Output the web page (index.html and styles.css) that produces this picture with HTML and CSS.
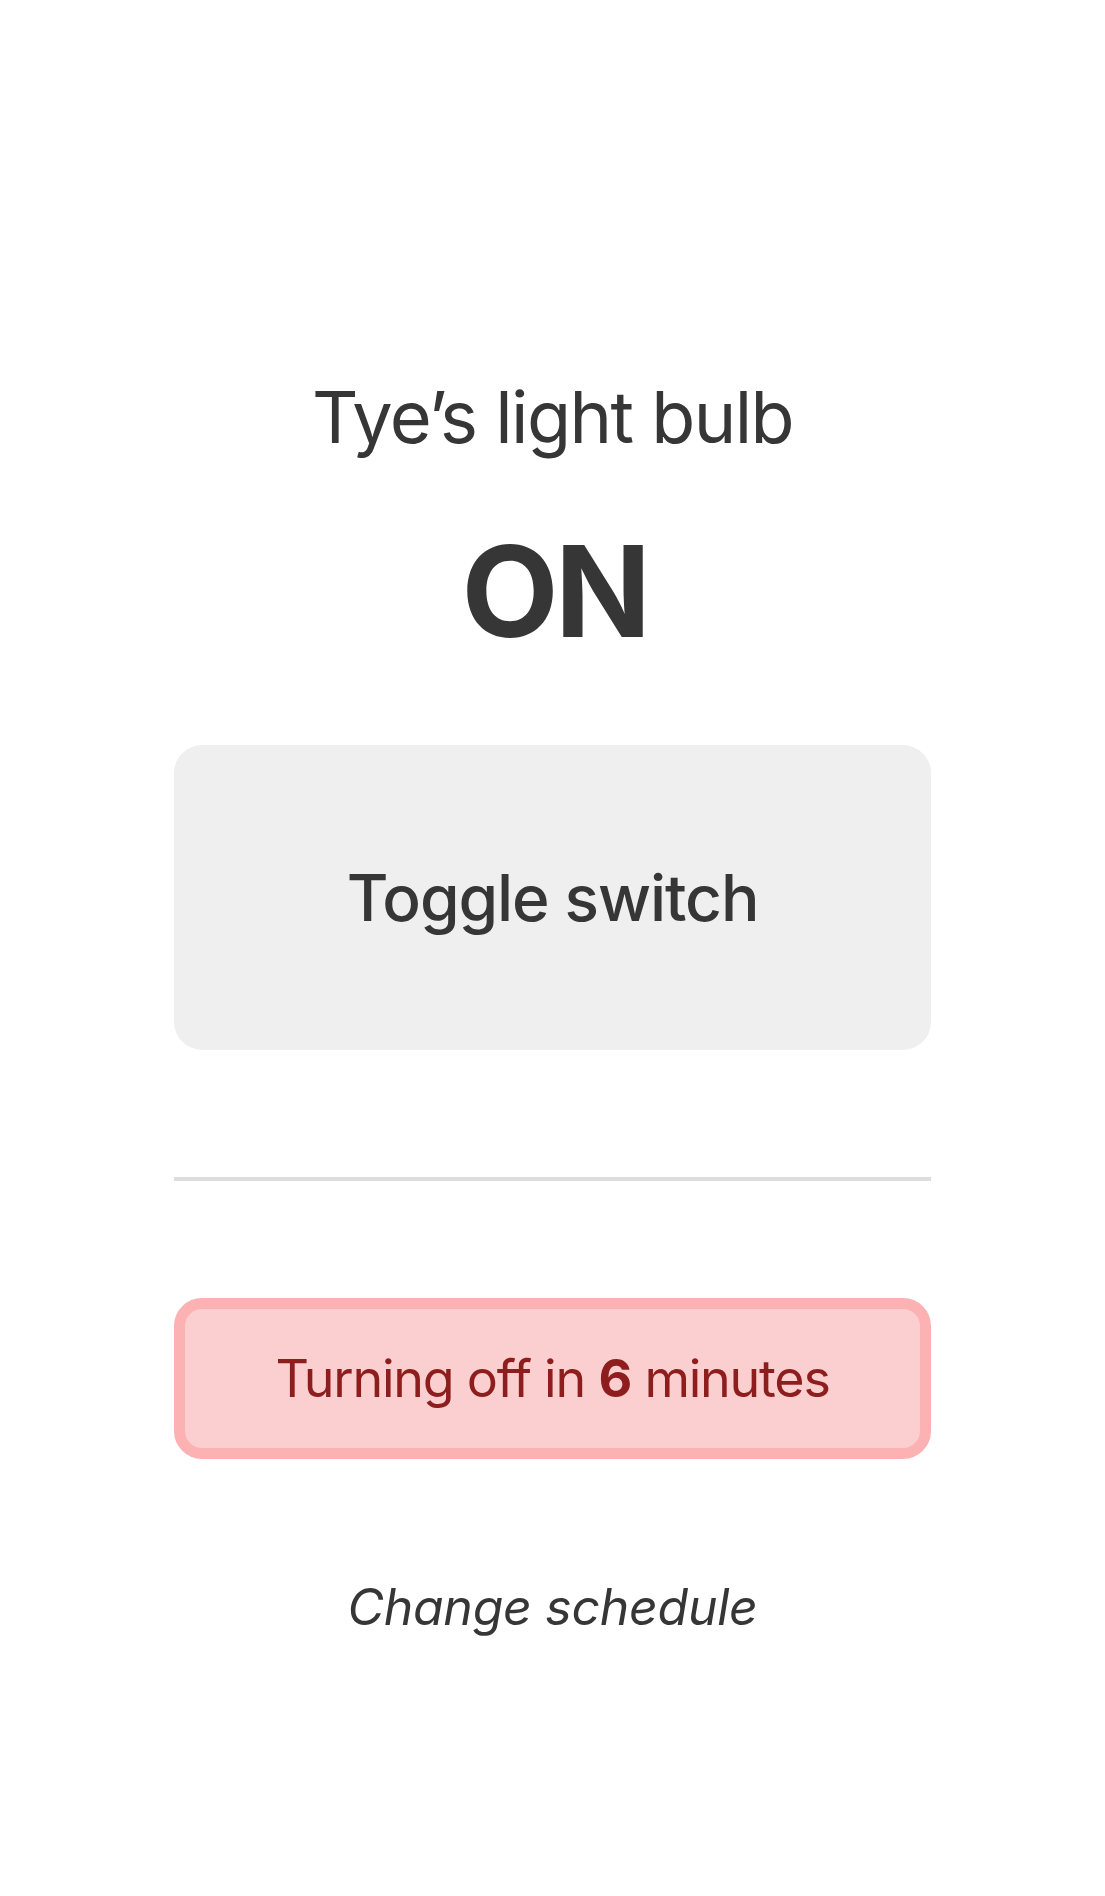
FILE: index.html
```html
<!DOCTYPE html>
<html>
<head>
<meta charset="utf-8">
<link rel="stylesheet" href="styles.css">
</head>
<body>
<main class="page">
  <h1 class="title">Tye’s light bulb</h1>
  <div class="state">ON</div>
  <button class="toggle">Toggle switch</button>
  <hr class="divider">
  <div class="timer">Turning off in <strong>6</strong> minutes</div>
  <a class="schedule">Change schedule</a>
</main>
</body>
</html>
```
FILE: styles.css
```css
html, body {
  margin: 0;
  padding: 0;
  background: #ffffff;
}
body {
  font-family: Inter, "Noto Sans", sans-serif;
  color: #363636;
  letter-spacing: -0.017em;
}
.page {
  width: 757px;
  margin: 0 auto;
  padding-top: 381px;
  display: flex;
  flex-direction: column;
  align-items: stretch;
  text-align: center;
}
.title {
  margin: 0;
  font-size: 72px;
  line-height: 72px;
  font-weight: 400;
  letter-spacing: -1.57px;
}
.state {
  margin-top: 75px;
  font-size: 126px;
  line-height: 126px;
  font-weight: 700;
  letter-spacing: -3.6px;
  padding-left: 4px;
}
.toggle {
  margin-top: 91px;
  height: 305px;
  border: none;
  border-radius: 28px;
  background: #efefef;
  font-family: inherit;
  letter-spacing: -0.017em;
  color: #363636;
  font-size: 64px;
  line-height: 64px;
  font-weight: 500;
  padding: 0;
}
.divider {
  margin: 127px 0 0;
  border: none;
  height: 4px;
  background: #dddddd;
}
.timer {
  margin-top: 117px;
  height: 139px;
  border: 11px solid #fcb2b2;
  border-radius: 28px;
  background: #fbcfcf;
  color: #8e1d1d;
  font-size: 52px;
  line-height: 52px;
  letter-spacing: -1.25px;
  display: flex;
  align-items: center;
  justify-content: center;
  gap: 0.26em;
}
.timer strong {
  font-weight: 700;
}
.schedule {
  margin-top: 116px;
  font-size: 50px;
  line-height: 64px;
  font-style: italic;
  color: #363636;
}
```
